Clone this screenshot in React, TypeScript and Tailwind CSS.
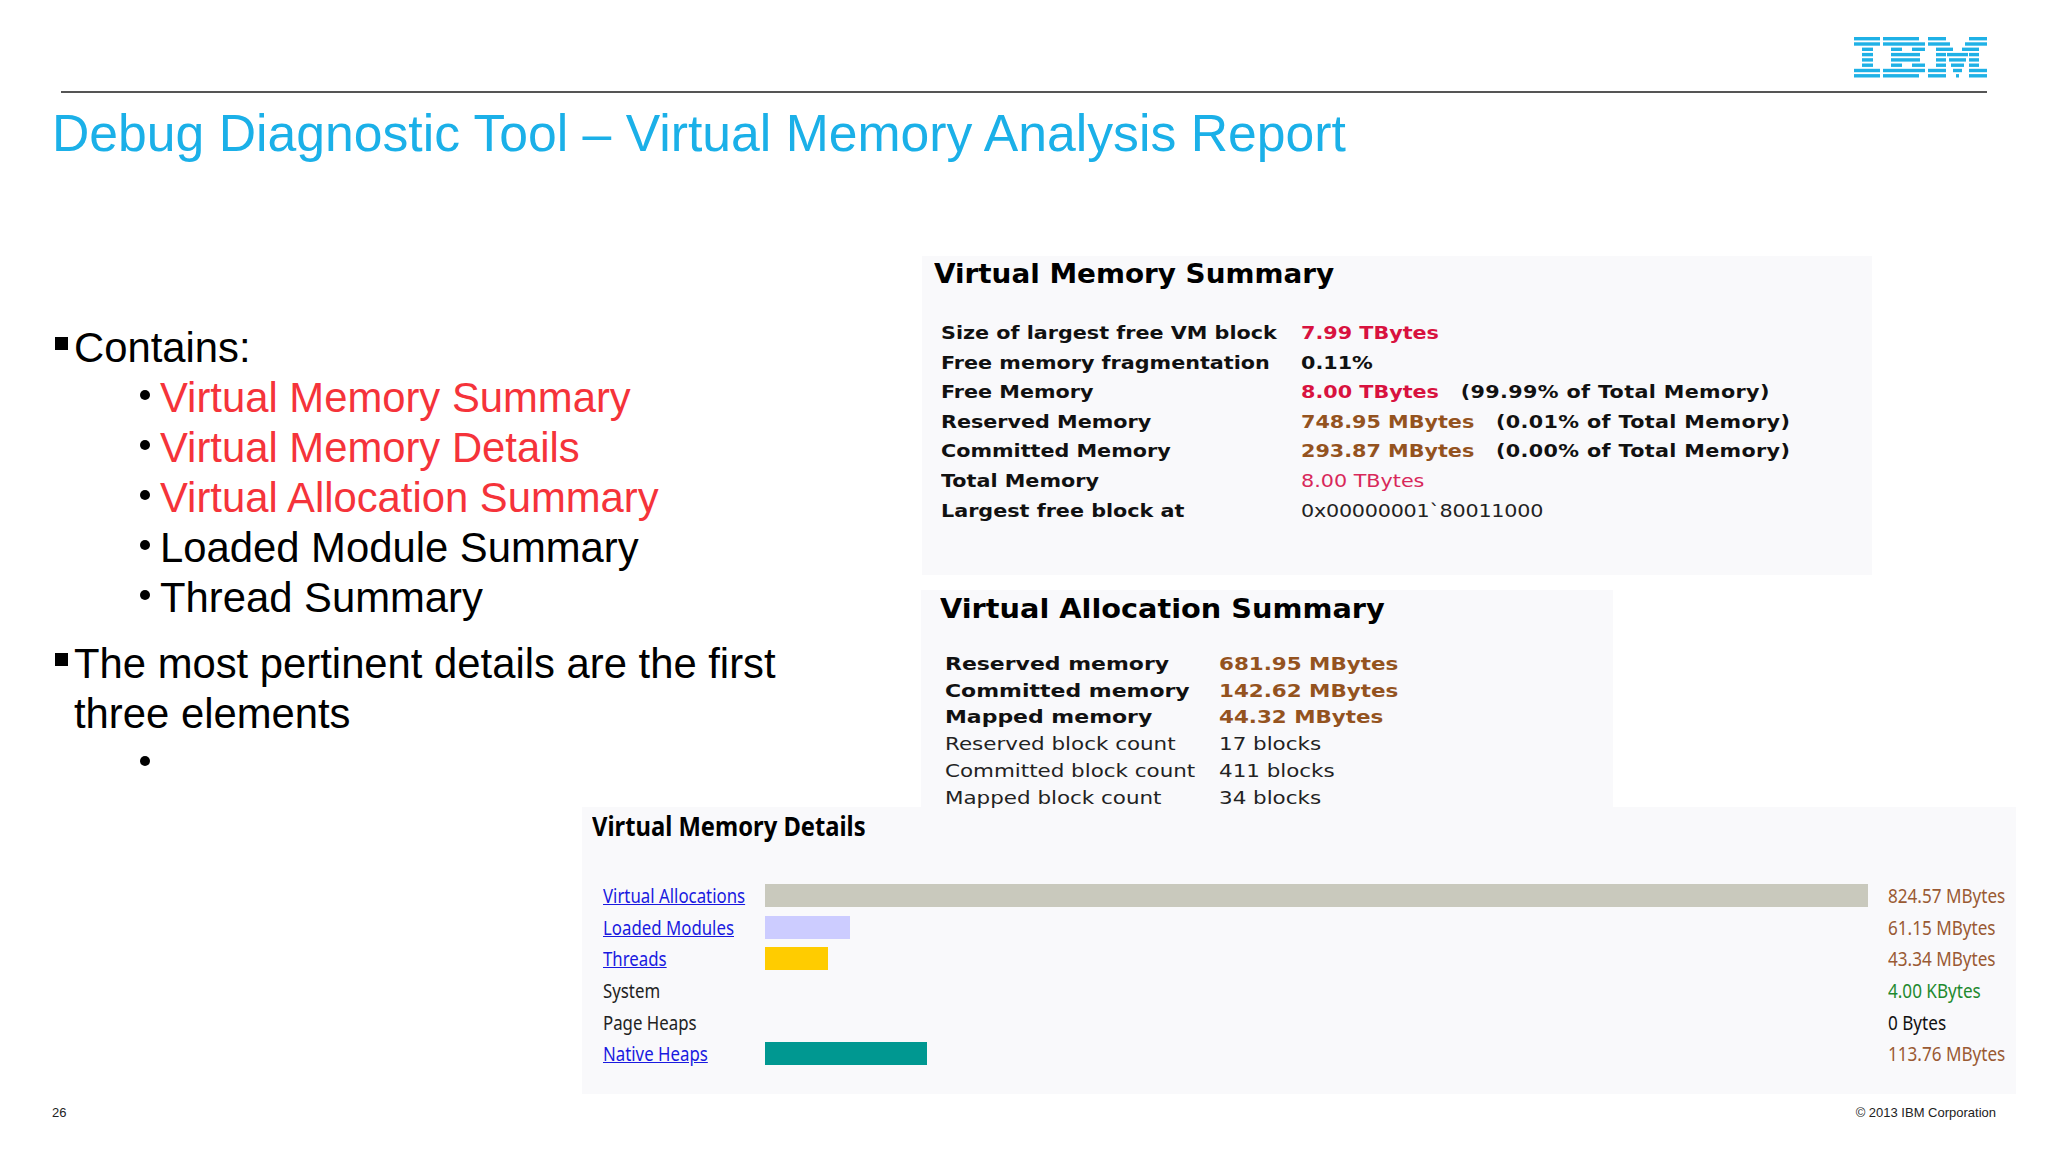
import React from 'react';

const ibmRows: number[][][] = [
  // each row of the striped logo: [x1, x2] segments
  [[0, 26], [29, 65], [74, 92], [115, 133]],
  [[0, 26], [29, 71], [74, 96], [111, 133]],
  [[8, 19], [37, 48], [58, 71], [82, 99], [108, 125]],
  [[8, 19], [37, 66], [82, 92], [93, 114], [115, 125]],
  [[8, 19], [37, 66], [82, 92], [95, 112], [115, 125]],
  [[8, 19], [37, 48], [58, 71], [82, 92], [97, 110], [115, 125]],
  [[0, 26], [29, 71], [74, 92], [99, 108], [115, 133]],
  [[0, 26], [29, 65], [74, 92], [102, 105], [115, 133]],
];

const IbmLogo = () => (
  <svg width="133" height="41" viewBox="0 0 133 41" className="block">
    {ibmRows.map((row, i) =>
      row.map(([a, b], j) => <rect key={`${i}-${j}`} x={a} y={i * 5.3} width={b - a} height="3.4" fill="#1fb1e6" />)
    )}
  </svg>
);

const summaryRows = [
  { label: 'Size of largest free VM block', value: '7.99 TBytes', cls: 'font-bold text-[#d8123f]' },
  { label: 'Free memory fragmentation', value: '0.11%', cls: 'font-bold text-[#111]' },
  { label: 'Free Memory', value: '8.00 TBytes', cls: 'font-bold text-[#d8123f]', note: '(99.99% of Total Memory)' },
  { label: 'Reserved Memory', value: '748.95 MBytes', cls: 'font-bold text-[#94531f]', note: '(0.01% of Total Memory)' },
  { label: 'Committed Memory', value: '293.87 MBytes', cls: 'font-bold text-[#94531f]', note: '(0.00% of Total Memory)' },
  { label: 'Total Memory', value: '8.00 TBytes', cls: 'font-normal text-[#d8285a]' },
  { label: 'Largest free block at', value: '0x00000001`80011000', cls: 'font-normal tracking-[-0.2px] text-[#222]' },
];

const allocRows = [
  { label: 'Reserved memory', value: '681.95 MBytes', bold: true },
  { label: 'Committed memory', value: '142.62 MBytes', bold: true },
  { label: 'Mapped memory', value: '44.32 MBytes', bold: true },
  { label: 'Reserved block count', value: '17 blocks', bold: false },
  { label: 'Committed block count', value: '411 blocks', bold: false },
  { label: 'Mapped block count', value: '34 blocks', bold: false },
];

const detailRows = [
  { label: 'Virtual Allocations', link: true, bar: 'w-[1103px] bg-[#c9c9bd]', value: '824.57 MBytes', color: 'text-[#9a5a33]' },
  { label: 'Loaded Modules', link: true, bar: 'w-[85px] bg-[#ccccff]', value: '61.15 MBytes', color: 'text-[#9a5a33]' },
  { label: 'Threads', link: true, bar: 'w-[63px] bg-[#ffcc00]', value: '43.34 MBytes', color: 'text-[#9a5a33]' },
  { label: 'System', link: false, bar: '', value: '4.00 KBytes', color: 'text-[#1f8a2f]' },
  { label: 'Page Heaps', link: false, bar: '', value: '0 Bytes', color: 'text-[#111]' },
  { label: 'Native Heaps', link: true, bar: 'w-[162px] bg-[#009891]', value: '113.76 MBytes', color: 'text-[#9a5a33]' },
];

const subItems = [
  { text: 'Virtual Memory Summary', red: true },
  { text: 'Virtual Memory Details', red: true },
  { text: 'Virtual Allocation Summary', red: true },
  { text: 'Loaded Module Summary', red: false },
  { text: 'Thread Summary', red: false },
];

const SubBullet = ({ children, red }: { children?: React.ReactNode; red?: boolean }) => (
  <div className={`flex h-[50px] items-start pl-[140px] ${red ? 'text-[#f5333a]' : 'text-black'}`}>
    <span className="mt-[17px] mr-[10px] h-[10px] w-[10px] shrink-0 rounded-full bg-black" />
    <span>{children}</span>
  </div>
);

export default function App() {
  return (
    <div className="h-[1152px] w-[2048px] overflow-hidden bg-white font-['Liberation_Sans',Arial,sans-serif]">
      {/* Header */}
      <div className="flex justify-end pt-[37px] pr-[61px]">
        <IbmLogo />
      </div>
      <div className="mt-[13px] ml-[61px] h-[2px] w-[1926px] bg-[#555]" />
      <h1 className="mt-[10px] ml-[52px] text-[51.7px] leading-[60px] font-normal text-[#1bb0e8]">
        Debug Diagnostic Tool – Virtual Memory Analysis Report
      </h1>

      {/* Text + pasted panels */}
      <div className="mt-[93px] flex h-[551px]">
        <div className="w-[920px] shrink-0 pt-[67px] text-[41.8px] leading-[50px]">
          <div className="flex pl-[55px]">
            <span className="mt-[14px] mr-[6px] h-[13px] w-[13px] shrink-0 bg-black" />
            <span>Contains:</span>
          </div>
          {subItems.map((item) => (
            <SubBullet key={item.text} red={item.red}>{item.text}</SubBullet>
          ))}
          <div className="mt-[16px] flex pl-[55px]">
            <span className="mt-[14px] mr-[6px] h-[13px] w-[13px] shrink-0 bg-black" />
            <span className="w-[760px]">The most pertinent details are the first three elements</span>
          </div>
          <SubBullet />
        </div>

        <div className="flex-1 font-['DejaVu_Sans',Verdana,sans-serif]">
          <div className="ml-[2px] h-[319px] w-[950px] bg-[#f9f9fb] pt-[3px] pl-[12px] text-[18px] leading-[29.6px] text-[#111]">
            <h2 className="origin-left scale-x-[1.07] text-[26px] leading-[30px] font-bold whitespace-nowrap text-black">Virtual Memory Summary</h2>
            <div className="mt-[29px] pl-[7px]">
              {summaryRows.map((r) => (
                <div key={r.label} className="grid grid-cols-[360px_1fr]">
                  <span className="origin-left scale-x-[1.15] font-bold whitespace-nowrap">{r.label}</span>
                  <span className="origin-left scale-x-[1.15] whitespace-nowrap">
                    <span className={r.cls}>{r.value}</span>
                    {r.note && <span className="ml-[19px] font-bold tracking-[0.3px]">{r.note}</span>}
                  </span>
                </div>
              ))}
            </div>
          </div>
          <div className="mt-[15px] ml-[1px] h-[217px] w-[692px] bg-[#f9f9fb] pt-[4px] pl-[19px] text-[18px] leading-[26.7px] text-[#222]">
            <h2 className="origin-left scale-x-[1.065] text-[27px] leading-[30px] font-bold whitespace-nowrap text-black">Virtual Allocation Summary</h2>
            <div className="mt-[27px] pl-[5px]">
              {allocRows.map((r) => (
                <div key={r.label} className="grid grid-cols-[274px_1fr]">
                  <span className={`origin-left whitespace-nowrap ${r.bold ? 'scale-x-[1.22] font-bold text-[#111]' : 'scale-x-[1.19]'}`}>{r.label}</span>
                  <span className={`origin-left scale-x-[1.19] whitespace-nowrap ${r.bold ? 'font-bold text-[#94531f]' : ''}`}>{r.value}</span>
                </div>
              ))}
            </div>
          </div>
        </div>
      </div>

      {/* Virtual Memory Details */}
      <div className="ml-[582px] h-[287px] w-[1434px] bg-[#f9f9fb] pl-[10px] font-['Noto_Sans',Tahoma,sans-serif] text-[#222]">
        <h2 className="inline-block origin-left scale-x-[0.88] pt-[2px] text-[27px] leading-[34px] font-bold whitespace-nowrap text-black">
          Virtual Memory Details
        </h2>
        <div className="mt-[37px] pl-[11px] text-[19px] leading-[24px]">
          {detailRows.map((r) => (
            <div key={r.label} className="flex h-[31.7px] items-center">
              <div className="w-[162px] shrink-0">
                <span className={`inline-block origin-left scale-x-[0.885] whitespace-nowrap ${r.link ? 'text-[#1a1ae0] underline' : ''}`}>
                  {r.label}
                </span>
              </div>
              <div className="w-[1123px] shrink-0">
                {r.bar && <div className={`-mt-[1px] h-[23px] ${r.bar}`} />}
              </div>
              <span className={`inline-block origin-left scale-x-[0.9] whitespace-nowrap ${r.color}`}>{r.value}</span>
            </div>
          ))}
        </div>
      </div>

      {/* Footer */}
      <div className="mt-[11px] flex justify-between pr-[52px] pl-[52px] text-[13px] leading-[16px] text-[#222]">
        <span>26</span>
        <span>© 2013 IBM Corporation</span>
      </div>
    </div>
  );
}
